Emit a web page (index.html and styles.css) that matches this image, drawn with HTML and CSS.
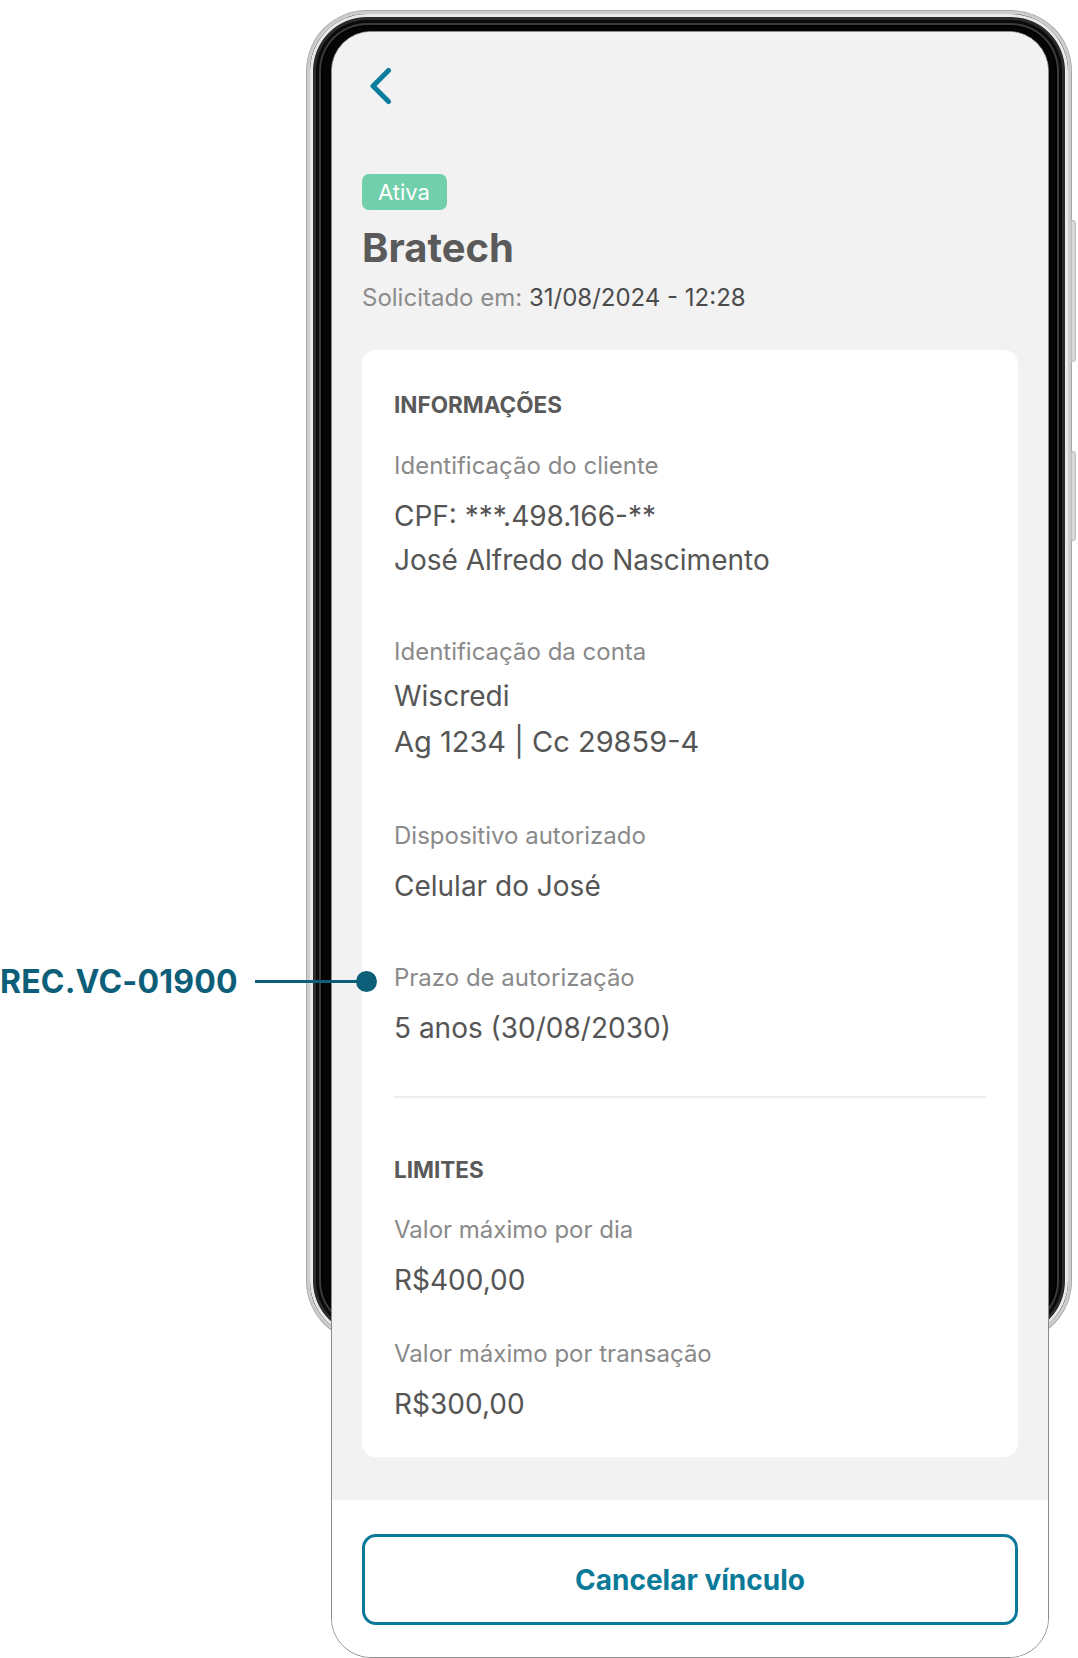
FILE: index.html
```html
<!DOCTYPE html>
<html lang="pt-BR">
<head>
<meta charset="utf-8">
<title>Bratech - Vínculo</title>
<link rel="stylesheet" href="styles.css">
</head>
<body>
<div class="stage">
  <div class="frame">
    <span class="side-btn side-btn-1"></span>
    <span class="side-btn side-btn-2"></span>
  </div>

  <div class="screen">
    <main class="content">
      <button class="back" aria-label="Voltar">
        <svg width="24" height="38" viewBox="0 0 24 38"><path d="M19.5 3.5 L4 19 L19.5 34.5" fill="none" stroke="#0b7d9c" stroke-width="5" stroke-linecap="round" stroke-linejoin="round"/></svg>
      </button>

      <span class="badge">Ativa</span>
      <h1 class="title">Bratech</h1>
      <p class="requested"><span class="requested-label">Solicitado em:</span> 31/08/2024 - 12:28</p>

      <section class="card">
        <h2 class="section-title">INFORMAÇÕES</h2>

        <div class="field field-first">
          <div class="label">Identificação do cliente</div>
          <div class="value">CPF: ***.498.166-**</div>
          <div class="value value-next">José Alfredo do Nascimento</div>
        </div>

        <div class="field">
          <div class="label">Identificação da conta</div>
          <div class="value value-tight">Wiscredi</div>
          <div class="value value-large">Ag 1234 | Cc 29859-4</div>
        </div>

        <div class="field">
          <div class="label">Dispositivo autorizado</div>
          <div class="value">Celular do José</div>
        </div>

        <div class="field">
          <div class="label">Prazo de autorização</div>
          <div class="value">5 anos (30/08/2030)</div>
        </div>

        <hr class="divider">

        <h2 class="section-title section-title-limits">LIMITES</h2>

        <div class="field field-limit-first">
          <div class="label">Valor máximo por dia</div>
          <div class="value">R$400,00</div>
        </div>

        <div class="field field-compact">
          <div class="label">Valor máximo por transação</div>
          <div class="value">R$300,00</div>
        </div>
      </section>
    </main>

    <footer class="footer">
      <button class="btn-outline">Cancelar vínculo</button>
    </footer>
  </div>

  <div class="annotation">
    <span class="annotation-text">REC.VC-01900</span>
    <span class="annotation-line"></span>
    <span class="annotation-dot"></span>
  </div>
</div>
</body>
</html>
```

FILE: styles.css
```css
* { box-sizing: border-box; }

html, body {
  margin: 0;
  padding: 0;
  background: #ffffff;
  overflow: hidden;
}

body {
  font-family: Inter, "Noto Sans", "Liberation Sans", sans-serif;
  color: #555555;
}

.stage {
  position: relative;
  width: 1078px;
  height: 1658px;
  padding-top: 31px;
  padding-left: 331px;
}

/* decorative device frame, lies under the screen */
.frame {
  position: absolute;
  left: 307px;
  top: 11px;
  width: 764px;
  height: 1330px;
  border-radius: 60px;
  background: #050505;
  border: 3px solid #cdcdcd;
  box-shadow:
    0 0 0 1px #a9a9a9,
    inset 0 0 0 3px #e9e9e9,
    inset 0 0 0 6px #2b2b2b,
    inset 0 0 0 9px #0a0a0a,
    inset 0 0 0 11px #3a3a3a,
    inset 0 0 0 13px #000000;
}

.side-btn {
  position: absolute;
  right: -8px;
  width: 5px;
  background: #d8d8d8;
  border: 1px solid #bdbdbd;
  border-radius: 0 3px 3px 0;
}
.side-btn-1 { top: 206px; height: 142px; }
.side-btn-2 { top: 437px; height: 90px; }

.screen {
  position: relative;
  width: 718px;
  height: 1627px;
  border: 1px solid #8a8a8a;
  border-radius: 40px;
  overflow: hidden;
  background: #ffffff;
  display: flex;
  flex-direction: column;
}

.content {
  background: #f2f2f2;
  padding: 35px 30px 43px;
  display: flex;
  flex-direction: column;
  align-items: flex-start;
}

.back {
  display: block;
  border: 0;
  background: none;
  padding: 0;
  margin: 0 0 0 7px;
  height: 38px;
  width: 24px;
  cursor: pointer;
}
.back svg { display: block; }

.badge {
  margin-top: 69px;
  height: 36px;
  line-height: 36px;
  padding: 0 17px 0 16px;
  border-radius: 7px;
  background: #71cfab;
  color: #ffffff;
  font-size: 22px;
}

.title {
  margin: 15px 0 0;
  font-size: 40px;
  line-height: 46px;
  font-weight: 700;
  color: #5a5a5a;
}

.requested {
  margin: 12px 0 0;
  font-size: 24px;
  line-height: 30px;
  color: #4b4b4b;
}
.requested-label { color: #8c8c8c; }

.card {
  align-self: stretch;
  margin-top: 37px;
  background: #ffffff;
  border-radius: 14px;
  padding: 40px 32px 31px;
}

.section-title {
  margin: 0;
  font-size: 22.5px;
  line-height: 30px;
  font-weight: 700;
  color: #5a5a5a;
}

.field { margin-top: 55px; }
.field-first { margin-top: 31px; }
.field-limit-first { margin-top: 30px; }
.field-compact { margin-top: 37px; }

.label {
  font-size: 24px;
  line-height: 30px;
  color: #8a8a8a;
}

.value {
  margin-top: 13px;
  font-size: 28px;
  line-height: 44px;
  color: #555555;
}
.value-next { margin-top: 0; }
.value-tight { margin-top: 7px; }
.value-large { margin-top: 0; font-size: 29px; line-height: 48px; }

.divider {
  margin: 46px 0 0;
  border: 0;
  border-top: 2px solid #eeeeee;
}

.section-title-limits { margin-top: 57px; }

.footer {
  flex: 1;
  background: #ffffff;
  padding: 34px 30px 30px;
}

.btn-outline {
  display: block;
  width: 100%;
  height: 91px;
  border: 3px solid #0b7a99;
  border-radius: 14px;
  background: #ffffff;
  color: #0b7a99;
  font-family: Inter, "Noto Sans", "Liberation Sans", sans-serif;
  font-size: 28px;
  font-weight: 700;
  cursor: pointer;
}

/* callout annotation lying over the frame */
.annotation {
  position: absolute;
  left: 0;
  top: 963px;
  height: 36px;
  display: flex;
  align-items: center;
}
.annotation-text {
  font-size: 32px;
  font-weight: 700;
  color: #0d5e79;
  letter-spacing: 0.2px;
}
.annotation-line {
  width: 111px;
  height: 3px;
  margin-left: 17px;
  background: #0d5e79;
}
.annotation-dot {
  flex: none;
  width: 21px;
  height: 21px;
  margin-left: -10px;
  border-radius: 50%;
  background: #0d5e79;
}
```
